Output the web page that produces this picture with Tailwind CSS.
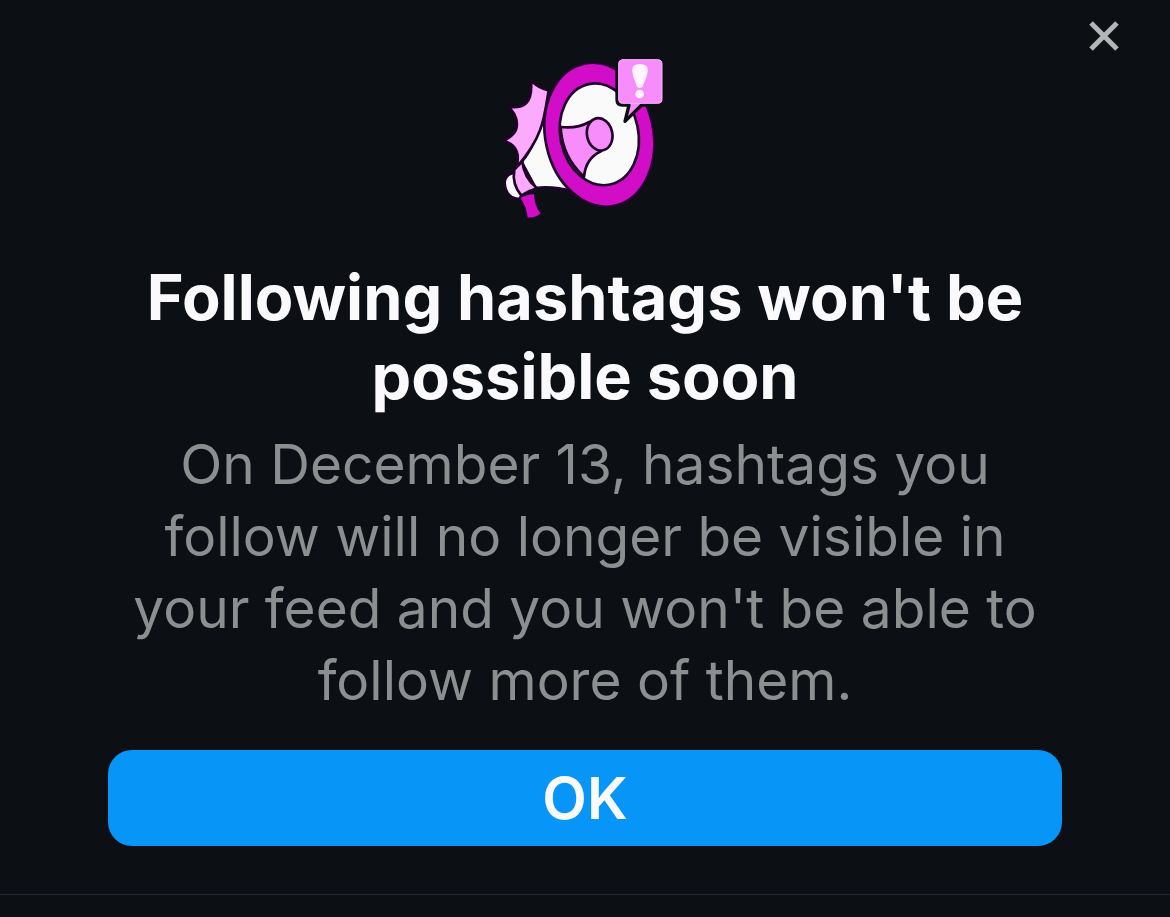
<!DOCTYPE html>
<html lang="en">
<head>
<meta charset="utf-8">
<meta name="viewport" content="width=device-width, initial-scale=1">
<title>Following hashtags</title>
<script src="https://cdn.jsdelivr.net/npm/@tailwindcss/browser@4"></script>
</head>
<body class="min-h-screen bg-[#0c1014] font-['Inter','Liberation_Sans',sans-serif]">
<main class="relative flex flex-col items-center border-b border-[#24272d] px-[108px] pt-[50px] pb-12 text-center">
  <button type="button" aria-label="Close" class="absolute top-4 right-[46px] flex size-10 items-center justify-center text-[#b4b5b7]">
    <svg class="size-8" viewBox="0 0 32 32" fill="none" stroke="currentColor" stroke-width="5" aria-hidden="true"><path d="M3 3 29 29M29 3 3 29"/></svg>
  </button>
  <svg class="size-[180px]" viewBox="0 0 540 540" stroke="#21032a" stroke-width="8" stroke-linejoin="round" stroke-linecap="round" aria-hidden="true">
    <path fill="#fafafa" d="M148 190C135 250 105 305 80 336L122 414Q175 408 232 424L250 380Z"/>
    <path fill="#fbaafc" d="M108 92Q132 116 161 121C154 165 149 205 136 238C122 277 96 315 65 352Q71 322 66 307Q58 281 25 273Q62 254 65 232Q70 196 39 170Q76 176 94 159Q112 141 108 92Z"/>
    <path fill="#fafafa" d="M62 367Q29 371 29 400Q33 445 72 447L86 430Z"/>
    <path fill="#fbaafc" d="M58 359L82 334Q86 382 126 415Q100 422 79 437Q50 401 58 359Z"/>
    <path fill="#d10dc8" stroke-width="4" d="M74 443Q96 431 119 430Q119 466 139 491Q122 506 96 504Q94 474 74 443Z"/>
    <ellipse cx="313" cy="254" rx="162" ry="218" transform="rotate(-12 313 254)" fill="#d10dc8"/>
    <ellipse cx="313" cy="253" rx="117" ry="154" transform="rotate(-12 313 253)" fill="#fafafa"/>
    <path fill="#f78cfb" d="M197 231Q245 237 283 216L318 304Q273 324 267 380Q201 320 197 231Z"/>
    <ellipse cx="314" cy="253" rx="38" ry="49" transform="rotate(-12 314 253)" fill="#f78cfb"/>
    <path fill="#f78cfb" stroke="#0c1014" stroke-width="10" d="M382 24H490Q506 24 506 40V149Q506 165 490 165H440L390 214L402 165H382Q366 165 366 149V40Q366 24 382 24Z"/>
    <path fill="none" stroke="#fcb4fd" stroke-width="3" d="M384 29H488Q501 29 501 42V147Q501 160 488 160H384Q371 160 371 147V42Q371 29 384 29Z"/>
    <path fill="#fff4ff" stroke="none" d="M412 61Q412 42 435 42Q458 42 458 61C458 78 447 96 444 109Q434 119 425 109C422 96 412 78 412 61Z"/>
    <circle cx="434" cy="132" r="13" fill="#fff4ff" stroke="none"/>
  </svg>
  <h1 class="mt-7 text-[63px] leading-[79px] font-bold text-[#fafafc]">Following hashtags won't be<br>possible soon</h1>
  <p class="mt-3 text-[55px] leading-[72px] text-[#8d8e8f]">On December 13, hashtags you<br>follow will no longer be visible in<br>your feed and you won't be able to<br>follow more of them.</p>
  <button type="button" class="mt-[34px] h-24 w-full rounded-[24px] bg-[#0895f8] text-[58px] font-semibold text-[#fafafc]">OK</button>
</main>
</body>
</html>
